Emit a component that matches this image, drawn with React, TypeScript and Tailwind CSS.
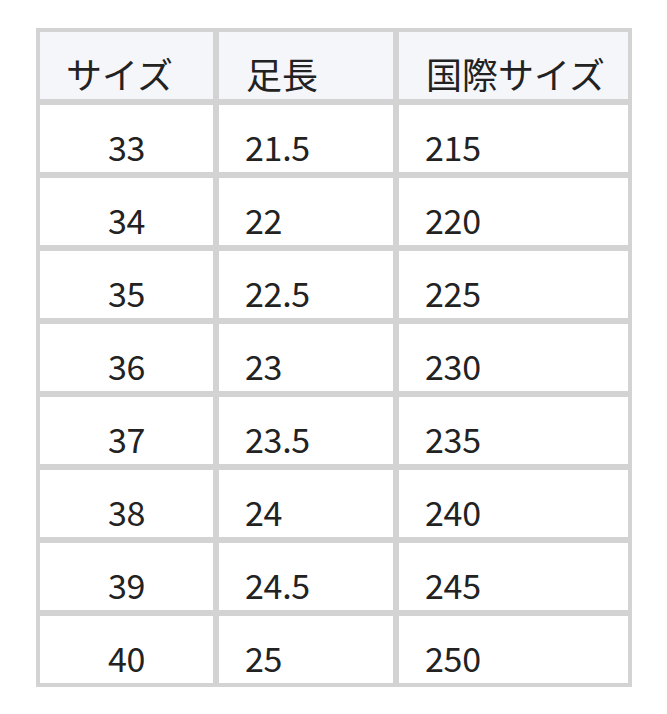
import React from "react";

const rows: [string, string, string][] = [
  ["33", "21.5", "215"],
  ["34", "22", "220"],
  ["35", "22.5", "225"],
  ["36", "23", "230"],
  ["37", "23.5", "235"],
  ["38", "24", "240"],
  ["39", "24.5", "245"],
  ["40", "25", "250"],
];

export default function App() {
  return (
    <div
      className="w-[667px] h-[714px] bg-white pt-[28px] pl-[36px] text-[#222222]"
      style={{ fontFamily: '"Noto Sans CJK JP", "Noto Sans", sans-serif' }}
    >
      <div className="w-[596px] bg-[#d3d3d3] p-[4px] pr-[5px]">
        <div className="grid grid-cols-[173px_174px_229px] gap-[6px] text-[36px] leading-[36px]">
          <div className="h-[67px] bg-[#f5f6fa] flex items-end pl-[26px] pb-[8px]">サイズ</div>
          <div className="h-[67px] bg-[#f5f6fa] flex items-end pl-[27px] pb-[8px]">足長</div>
          <div className="h-[67px] bg-[#f5f6fa] flex items-end pl-[27px] pb-[8px]">国際サイズ</div>
          {rows.map((r) => (
            <React.Fragment key={r[0]}>
              <div className="h-[67px] bg-white flex items-end justify-center pb-[7px] text-[34px] tracking-[-0.3px]">{r[0]}</div>
              <div className="h-[67px] bg-white flex items-end pl-[26px] pb-[7px] text-[34px] tracking-[-0.3px]">{r[1]}</div>
              <div className="h-[67px] bg-white flex items-end pl-[26px] pb-[7px] text-[34px] tracking-[-0.3px]">{r[2]}</div>
            </React.Fragment>
          ))}
        </div>
      </div>
    </div>
  );
}
